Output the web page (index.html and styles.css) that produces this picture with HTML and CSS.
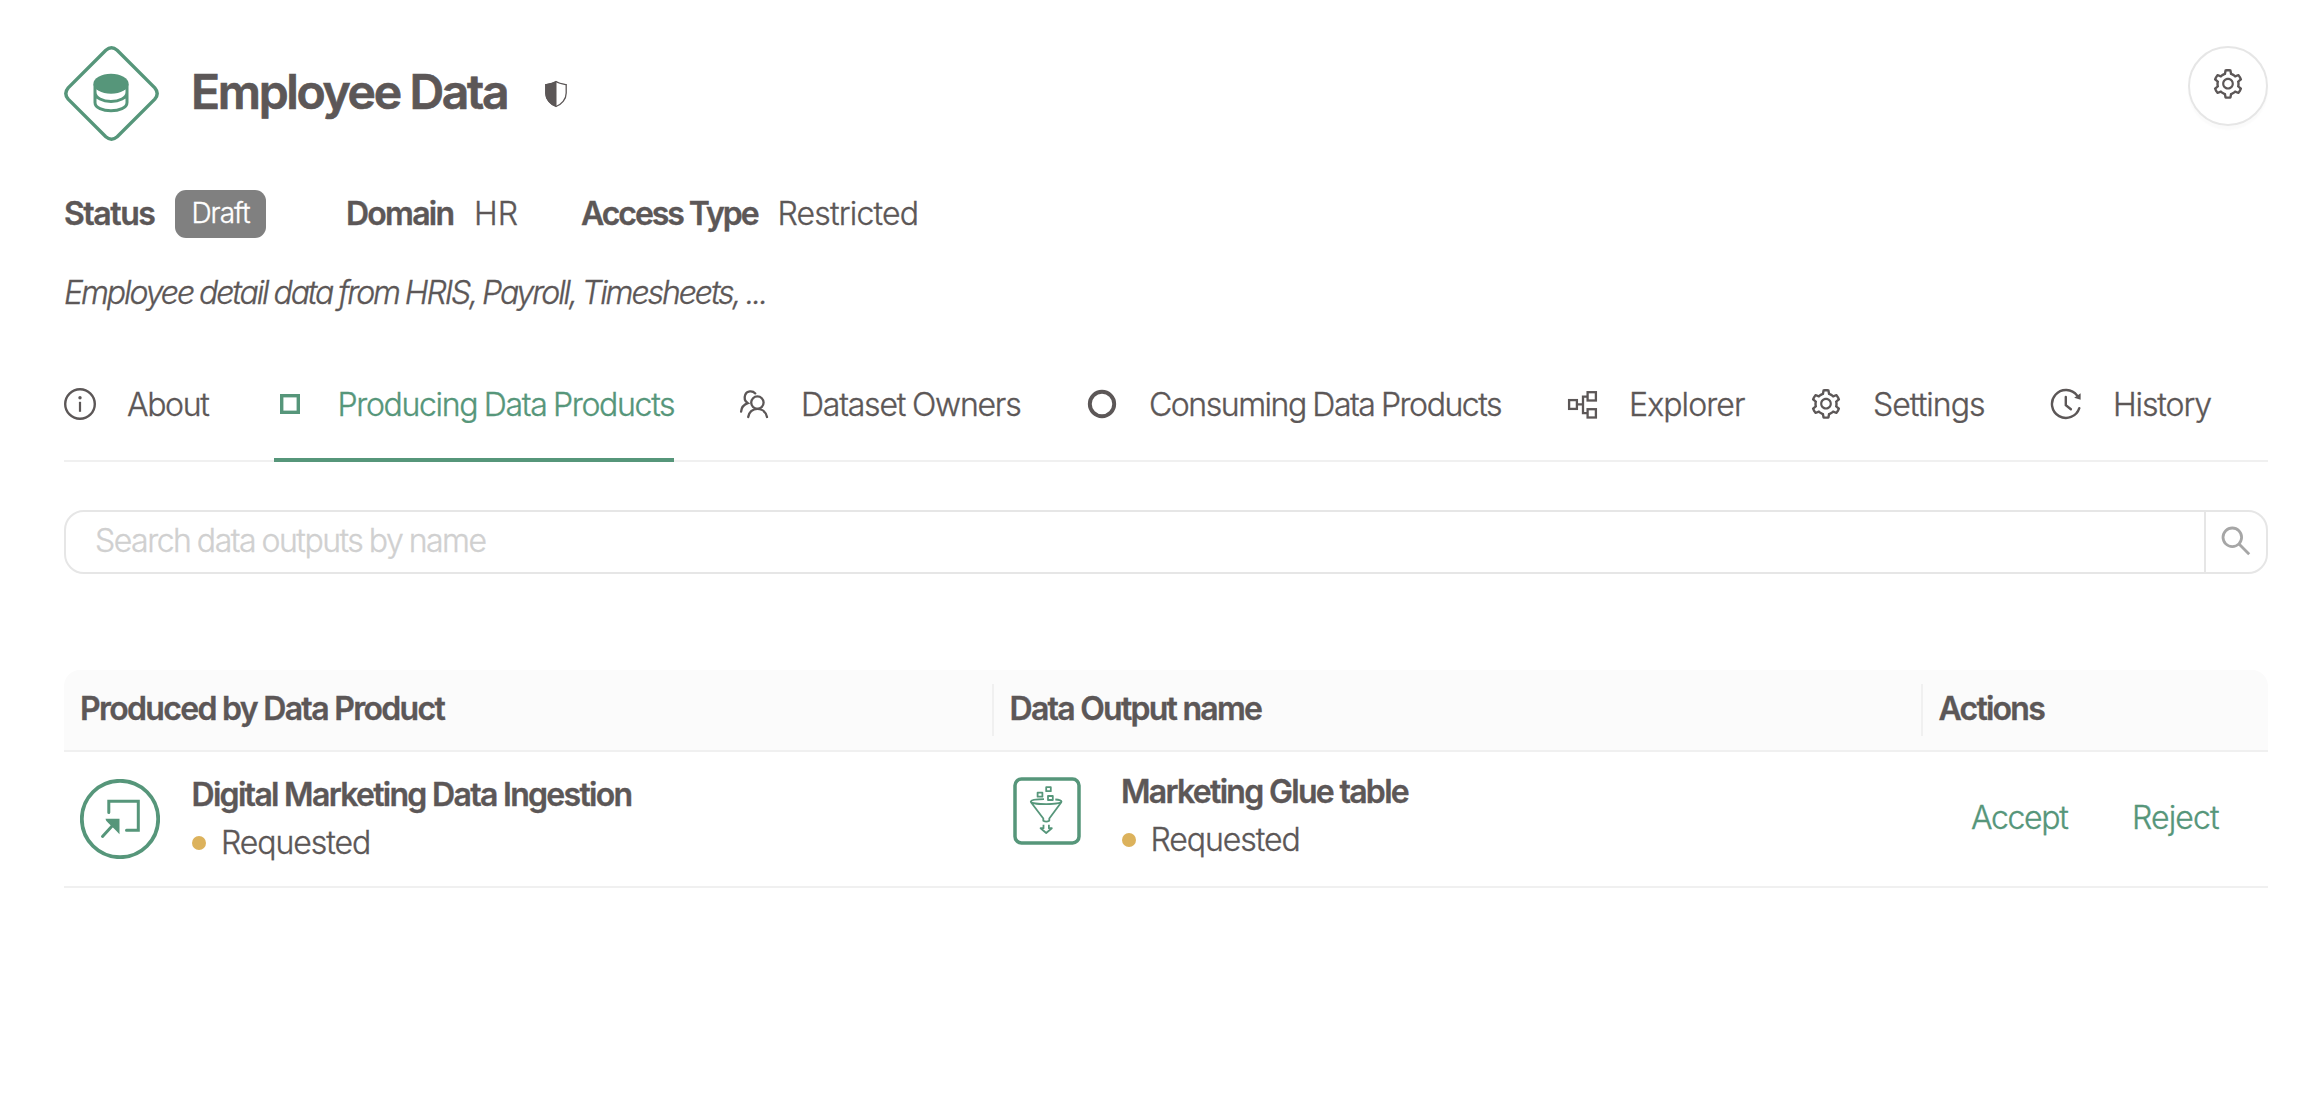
FILE: index.html
```html
<!DOCTYPE html>
<html lang="en">
<head>
<meta charset="utf-8">
<title>Employee Data</title>
<link rel="stylesheet" href="styles.css">
</head>
<body>
<svg class="defs" width="0" height="0">
  <symbol id="gear" viewBox="0 0 1024 1024"><path d="M924.8 625.7l-65.5-56c3.1-19 4.7-38.4 4.7-57.8s-1.6-38.8-4.7-57.8l65.5-56a32.03 32.03 0 009.3-35.2l-.9-2.6a443.74 443.74 0 00-79.7-137.9l-1.8-2.1a32.12 32.12 0 00-35.1-9.5l-81.3 28.9c-30-24.6-63.5-44-99.7-57.6l-15.7-85a32.05 32.05 0 00-25.8-25.7l-2.7-.5c-52.1-9.4-106.9-9.4-159 0l-2.7.5a32.05 32.05 0 00-25.8 25.7l-15.8 85.4a351.86 351.86 0 00-99 57.4l-81.9-29.1a32 32 0 00-35.1 9.5l-1.8 2.1a446.02 446.02 0 00-79.7 137.9l-.9 2.6c-4.5 12.5-.8 26.5 9.3 35.2l66.3 56.6c-3.1 18.8-4.6 38-4.6 57.1 0 19.2 1.5 38.4 4.6 57.1L99 625.5a32.03 32.03 0 00-9.3 35.2l.9 2.6c18.1 50.4 44.9 96.9 79.7 137.9l1.8 2.1a32.12 32.12 0 0035.1 9.5l81.9-29.1c29.8 24.5 63.1 43.9 99 57.4l15.8 85.4a32.05 32.05 0 0025.8 25.7l2.7.5a449.4 449.4 0 00159 0l2.7-.5a32.05 32.05 0 0025.8-25.7l15.7-85a350 350 0 0099.7-57.6l81.3 28.9a32 32 0 0035.1-9.5l1.8-2.1c34.8-41.1 61.6-87.5 79.7-137.9l.9-2.6c4.5-12.3.8-26.3-9.3-35zM788.3 465.9c2.5 15.1 3.8 30.6 3.8 46.1s-1.3 31-3.8 46.1l-6.6 40.1 74.7 63.9a370.03 370.03 0 01-42.6 73.6L721 702.8l-31.4 25.8c-23.9 19.6-50.5 35-79.3 45.8l-38.1 14.3-17.9 97a377.5 377.5 0 01-85 0l-17.9-97.2-37.8-14.5c-28.5-10.8-55-26.2-78.7-45.7l-31.4-25.9-93.4 33.2c-17-22.9-31.2-47.6-42.6-73.6l75.5-64.5-6.5-40c-2.4-14.9-3.7-30.3-3.7-45.5 0-15.3 1.2-30.6 3.7-45.5l6.5-40-75.5-64.5c11.3-26.1 25.6-50.7 42.6-73.6l93.4 33.2 31.4-25.9c23.7-19.5 50.2-34.9 78.7-45.7l37.9-14.3 17.9-97.2c28.1-3.2 56.8-3.2 85 0l17.9 97 38.1 14.3c28.7 10.8 55.4 26.2 79.3 45.8l31.4 25.8 92.8-32.9c17 22.9 31.2 47.6 42.6 73.6L781.8 426l6.5 39.9zM512 326c-97.2 0-176 78.8-176 176s78.8 176 176 176 176-78.8 176-176-78.8-176-176-176zm79.2 255.2A111.6 111.6 0 01512 614c-29.9 0-58-11.7-79.2-32.8A111.6 111.6 0 01400 502c0-29.9 11.7-58 32.8-79.2C454 401.6 482.1 390 512 390c29.9 0 58 11.6 79.2 32.8A111.6 111.6 0 01624 502c0 29.9-11.7 58-32.8 79.2z"/></symbol>
</svg>
<main class="page">
  <header class="header">
    <svg class="dataset-icon" viewBox="0 0 95 95">
      <path class="line" stroke-width="3.4" d="M41.8 4.2Q47.5-.6 53.2 4.2L90.8 41.8Q95.6 47.5 90.8 53.2L53.2 90.8Q47.5 95.6 41.8 90.8L4.2 53.2Q-.6 47.5 4.2 41.8Z"/>
      <ellipse class="solid" cx="47" cy="37.8" rx="17.6" ry="10"/>
      <path class="line" stroke-width="3" d="M31 38V56.500C31 67.500 63 67.500 63 56.500V38M31 46C31 58.500 63 58.500 63 46"/>
    </svg>
    <h1 class="title">Employee Data</h1>
    <svg class="shield" viewBox="0 0 24 28">
      <path fill="none" stroke="currentColor" stroke-width="1.3" d="M12 1.500C15 3.500 18.500 4 22.200 4.600V13C22.200 19.500 17.500 24.500 12 26.500C6.500 24.500 1.800 19.500 1.800 13V4.600C5.500 4 9 3.500 12 1.500Z"/>
      <path fill="currentColor" d="M12.500 1V27C6.500 25 1.200 19.500 1.200 13V4.200C5.500 3.500 9 3 12.500 1Z"/>
    </svg>
    <button class="round-btn" aria-label="Settings"><svg width="34" height="34"><use href="#gear"/></svg></button>
  </header>

  <section class="meta">
    <span class="meta-item"><b class="label status">Status</b><span class="badge">Draft</span></span>
    <span class="meta-item"><b class="label domain">Domain</b><span class="hr">HR</span></span>
    <span class="meta-item"><b class="label access">Access Type</b><span class="restricted">Restricted</span></span>
  </section>

  <p class="description">Employee detail data from HRIS, Payroll, Timesheets, ...</p>

  <nav class="tabs">
    <a class="tab about"><svg class="icon" viewBox="0 0 32 32"><circle cx="16" cy="16" r="14.800" fill="none" stroke="currentColor" stroke-width="2.400"/><circle cx="16" cy="9.800" r="1.700" fill="currentColor"/><path d="M16 13.800V23.800" stroke="currentColor" stroke-width="2.200"/></svg><span>About</span></a>
    <a class="tab active"><svg class="icon" viewBox="0 0 32 32"><rect x="7.700" y="7.700" width="16.600" height="16.600" fill="none" stroke="currentColor" stroke-width="3.400"/></svg><span>Producing Data Products</span></a>
    <a class="tab owners"><svg class="icon" viewBox="0 0 32 32"><g fill="none" stroke="currentColor" stroke-width="2.300" stroke-linecap="round"><circle cx="19.400" cy="14.600" r="6.200"/><path d="M10.200 29C10.800 24.300 14.500 20.900 19.400 20.900S28 24.300 29 29"/><path d="M17.300 5.400C14.500 2.300 8.800 2.700 7.200 6.800C6.100 9.700 6.900 13.200 9.800 15.200C6 16.500 3.500 19.600 3.100 23.600"/></g></svg><span>Dataset Owners</span></a>
    <a class="tab consuming"><svg class="icon" viewBox="0 0 32 32"><circle cx="16" cy="16" r="12.200" fill="none" stroke="currentColor" stroke-width="3.900"/></svg><span>Consuming Data Products</span></a>
    <a class="tab explorer"><svg class="icon" viewBox="0 0 32 32"><g fill="none" stroke="currentColor" stroke-width="2.300"><rect x="3.100" y="12.100" width="7.800" height="8.800"/><rect x="21.600" y="4.200" width="8.300" height="8.300"/><rect x="21.600" y="21.200" width="8.300" height="8.300"/><path d="M11 16.400H17M21.500 8.600H17V25.200H21.500"/></g></svg><span>Explorer</span></a>
    <a class="tab settings"><svg class="icon gear"><use href="#gear"/></svg><span>Settings</span></a>
    <a class="tab history"><svg class="icon" viewBox="0 0 32 32"><g fill="none" stroke="currentColor" stroke-width="2.400" stroke-linecap="round"><path d="M29.300 20.200A14 14 0 1 1 27.200 7.600"/><path d="M15.800 9V17.200L20.900 21.300"/></g><path d="M30.600 5.200V11.800L24.200 9.800Z" fill="currentColor"/></svg><span>History</span></a>
  </nav>

  <div class="search">
    <span class="search-text">Search data outputs by name</span>
    <button class="search-btn" aria-label="Search"><svg width="32" height="32" viewBox="0 0 32 32"><g fill="none" stroke="currentColor" stroke-width="2.800"><circle cx="12.300" cy="12.300" r="9.300"/><path d="M19 19L29.200 29.200"/></g></svg></button>
  </div>

  <section class="table">
    <div class="row head">
      <div class="cell produced">Produced by Data Product</div>
      <div class="cell output">Data Output name</div>
      <div class="cell actions-head">Actions</div>
    </div>
    <div class="row body">
      <div class="cell">
        <svg class="product-icon" viewBox="0 0 80 80"><circle class="line" cx="40" cy="40" r="38.200" stroke-width="3.800"/><path class="line" stroke-width="3" stroke-linecap="round" d="M28.800 33.500V22.300H58.300V51.300H46.500M22.500 57.500L33 46"/><path class="solid" d="M25.500 39.700H39.500V55.200L35.700 51.200L28.300 44Q25.500 41.500 25.500 39.700Z"/></svg>
        <div class="info"><div class="name digital">Digital Marketing Data Ingestion</div><div class="state"><i class="dot"></i>Requested</div></div>
      </div>
      <div class="cell">
        <svg class="output-icon" viewBox="0 0 68 68"><rect class="line" x="2" y="2" width="64" height="64" rx="6.500" stroke-width="3.500"/><g class="line" stroke-width="1.800" stroke-linejoin="round"><rect x="33.200" y="10.200" width="4.600" height="4"/><rect x="24.600" y="15.700" width="4.800" height="4"/><rect x="35" y="19" width="4.800" height="4"/><path d="M31 22.200C24 22.200 18 23 17.800 24.600C18 28 48.500 28 48.500 24.600C48.300 23.300 45.500 22.700 42.300 22.500M17.800 25L30.300 41.500V43.800Q33.200 45.500 36.300 43.800V41.500L48.500 25"/><path d="M30.500 47.700V51.200H27.600L33.200 56L38.800 51.200H35.900V47.700"/></g></svg>
        <div class="info"><div class="name glue">Marketing Glue table</div><div class="state"><i class="dot"></i>Requested</div></div>
      </div>
      <div class="cell actions"><a class="accept">Accept</a><a class="reject">Reject</a></div>
    </div>
  </section>
</main>
</body>
</html>
```
FILE: styles.css
```css
* { box-sizing: border-box; }
body {
  margin: 0;
  background: #fff;
  color: #5c5757;
  font: 300 32px/48px Inter, "Liberation Sans", sans-serif;
  letter-spacing: -1.3px;
  white-space: nowrap;
  -webkit-text-stroke: .35px currentColor;
}
button { padding: 0; background: none; border: 0; color: inherit; font: inherit; }
svg { display: block; flex: none; fill: currentColor; }
.defs { position: absolute; }
.line { fill: none; stroke: #56967a; }
.solid { fill: #56967a; }
.page { padding: 46px 32px 0 64px; }

.header { display: flex; height: 95px; }
.dataset-icon { width: 95px; height: 95px; }
.title {
  margin: 18px 0 0 32px;
  width: 350px;
  font-size: 48px;
  line-height: 56px;
  font-weight: 600;
  letter-spacing: -2.32px;
  -webkit-text-stroke-width: .7px;
}
.shield { width: 24px; height: 28px; margin: 34px 0 0 3px; }
.round-btn {
  display: flex;
  align-items: center;
  justify-content: center;
  width: 80px;
  height: 80px;
  margin-left: auto;
  padding-bottom: 5px;
  border: 2px solid #e6e6e6;
  border-radius: 50%;
  box-shadow: 0 4px 2px rgba(0, 0, 0, .02);
}

.meta { display: flex; height: 48px; margin-top: 49px; }
.meta-item { display: flex; gap: 20px; height: 48px; line-height: 47px; }
.meta-item:nth-child(1) { width: 282px; }
.meta-item:nth-child(2) { width: 235px; }
.label { font-weight: 600; }
.status { width: 91px; letter-spacing: -1.45px; }
.domain { width: 108px; letter-spacing: -1.75px; }
.access { width: 176.5px; letter-spacing: -2.05px; }
.hr { letter-spacing: 0; }
.restricted { letter-spacing: -.8px; }
.badge {
  width: 91px;
  border-radius: 11px;
  background: #808080;
  color: #fff;
  font-size: 28px;
  line-height: 47px;
  letter-spacing: -.95px;
  text-align: center;
}

.description {
  margin: 31px 0 0;
  font-style: italic;
  letter-spacing: -2.07px;
  word-spacing: -1px;
}

.tabs {
  display: grid;
  grid-template-columns: 146px 400px 284px 416px 180px 176px auto;
  column-gap: 64px;
  height: 98px;
  margin-top: 47px;
  border-bottom: 2px solid #f0f0f0;
}
.tab { display: flex; gap: 31px; height: 98px; padding-top: 16px; line-height: 50px; }
.icon { width: 32px; height: 32px; margin-top: 8px; }
.icon.gear { width: 34px; height: 34px; margin: 7px -1px 0; }
.tab.active {
  gap: 31.5px;
  color: #56967a;
  border-bottom: 4px solid #56967a;
  letter-spacing: -1.33px;
  word-spacing: -1px;
}
.about { letter-spacing: -1.35px; }
.owners { letter-spacing: -1.2px; word-spacing: -1px; }
.consuming { letter-spacing: -1.46px; word-spacing: -1px; }
.explorer { letter-spacing: -.9px; }
.settings { letter-spacing: -.95px; }
.history { letter-spacing: -1.1px; }

.search {
  display: flex;
  height: 64px;
  margin-top: 48px;
  border: 2px solid #e6e6e6;
  border-radius: 20px;
}
.search-text {
  flex: 1;
  padding-left: 29px;
  line-height: 58px;
  color: #d0d0d0;
  letter-spacing: -1.5px;
  word-spacing: -1px;
}
.search-btn {
  display: flex;
  align-items: center;
  justify-content: center;
  width: 62px;
  padding-bottom: 3px;
  border-left: 2px solid #e6e6e6;
  color: #a6a6a6;
}

.table { margin-top: 96px; }
.row { display: grid; grid-template-columns: 930px 929px 1fr; border-bottom: 2px solid #f0f0f0; }
.head {
  height: 82px;
  border-radius: 16px 16px 0 0;
  background: #fbfbfb;
  font-weight: 600;
  line-height: 78px;
  letter-spacing: -1.73px;
}
.cell { padding-left: 16px; }
.head .cell + .cell {
  margin-left: -2px;
  padding-left: 17.5px;
  background: linear-gradient(#f0f0f0, #f0f0f0) 0 14px / 2px 52px no-repeat;
}
.produced { letter-spacing: -1.69px; }
.actions-head { letter-spacing: -1.75px; }
.body { height: 136px; }
.body .cell { display: flex; }
.product-icon { width: 80px; height: 80px; margin-top: 27px; }
.product-icon + .info { margin: 19px 0 0 31.5px; }
.output-icon { width: 68px; height: 68px; margin: 24.5px 0 0 2.5px; }
.output-icon + .info { margin: 16px 0 0 40.5px; }
.name { font-weight: 600; letter-spacing: -1.69px; }
.state { display: flex; align-items: center; letter-spacing: -1.05px; }
.dot { width: 14px; height: 14px; margin: 0 15px 0 .5px; border-radius: 50%; background: #dcb25c; }
.actions { color: #56967a; line-height: 132px; }
.body .actions { padding-left: 48px; gap: 64px; }
.accept { width: 97px; letter-spacing: -1.35px; }
.reject { letter-spacing: -.85px; }
```
